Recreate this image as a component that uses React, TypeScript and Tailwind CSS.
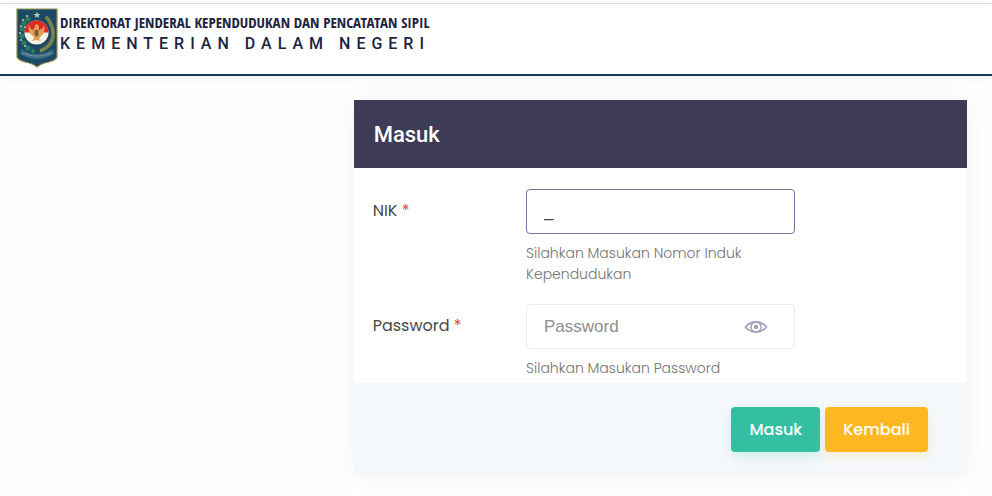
import React, { useState } from 'react';

const Emblem: React.FC = () => (
  <svg viewBox="0 0 42 60" className="w-[42px] h-[60px] shrink-0" role="img" aria-label="Kementerian Dalam Negeri">
    <path d="M1 1H41V49Q40 52 33 54Q25 55.500 21 59Q17 55.500 9 54Q2 52 1 49Z" fill="#1b4a66" stroke="#8d8c4e" strokeWidth="1.200" />
    {/* cotton on the left, rice on the right */}
    <g fill="#2f7d5d">
      <circle cx="12" cy="11" r="2.500" />
      <circle cx="8" cy="15" r="2.500" />
      <circle cx="6" cy="21" r="2.500" />
      <circle cx="6" cy="28" r="2.500" />
      <circle cx="8" cy="35" r="2.500" />
      <circle cx="12" cy="40" r="2.500" />
      <circle cx="17" cy="43" r="2" />
    </g>
    <g fill="#b5d0cc">
      <circle cx="11" cy="8" r="1" />
      <circle cx="7" cy="12" r="1" />
      <circle cx="5" cy="18" r="1" />
      <circle cx="9" cy="19" r="1" />
      <circle cx="4" cy="25" r="1" />
      <circle cx="5" cy="32" r="1" />
      <circle cx="9" cy="38" r="1" />
    </g>
    <path d="M30 9Q38 17 37 29Q35 39 24 43" fill="none" stroke="#5d7350" strokeWidth="4" />
    <path d="M30 9Q38 17 37 29Q35 39 24 43" fill="none" stroke="#978f52" strokeWidth="2.500" strokeDasharray="1.500 1" />
    <path d="M21 3.500L22 6H24.500L22.500 7.500L23.300 10L21 8.500L18.700 10L19.500 7.500L17.500 6H20Z" fill="#b9c8b3" />
    <circle cx="20.500" cy="24.500" r="12" fill="#f5f2e7" />
    <path d="M8.500 24.500A12 12 0 0 1 32.500 24.500Z" fill="#df2a20" />
    {/* garuda */}
    <path d="M13 17Q14 21 17 22L19 19L19 17L21 16L23 18L23 22Q27 21 28 17Q30 24 25 28L23 31L25 33L21 32L16 33L18 30L17 28Q11 24 13 17Z" fill="#e0a05a" />
    <path d="M18.500 22H22.500V27L20.500 29L18.500 27Z" fill="#8b5833" />
    <path d="M5 41Q21 51 37 41L38 46Q30 51 21 51Q12 51 4 46Z" fill="#386b85" />
    <path d="M7 45Q21 51 35 45" fill="none" stroke="#8fa59c" strokeWidth="1.200" strokeDasharray="1.500 1" />
  </svg>
);

const EyeIcon: React.FC = () => (
  <svg viewBox="0 0 24 16" className="w-6 h-4" fill="none" stroke="#a3a2c0" aria-hidden="true">
    <path d="M1.500 8Q5.500 3 12 3T22.500 8Q18.500 13 12 13T1.500 8Z" strokeWidth="1.800" />
    <circle cx="12" cy="8" r="5" strokeWidth="1.500" />
    <circle cx="12" cy="8" r="2.300" fill="#a3a2c0" stroke="none" />
  </svg>
);

const Required: React.FC = () => <span className="text-[#e0443c]">*</span>;

const App: React.FC = () => {
  const [nik, setNik] = useState('_');
  const [password, setPassword] = useState('');
  const [showPassword, setShowPassword] = useState(false);

  return (
    <div className="min-h-screen bg-[#fefefe] font-['Poppins','Inter',sans-serif] text-[#484848]">
      <header className="mt-[3px] flex items-start border-t border-t-[#dcdcdc] border-b-2 border-b-[#173b51] bg-white px-4 pt-1 pb-1.5 shadow-[0_2px_12px_rgba(60,60,90,0.05)]">
        <Emblem />
        <div className="ml-0.5 mt-1 whitespace-nowrap text-[#1d2340]">
          <div className="font-['Open_Sans_Condensed','Roboto',sans-serif] text-[15px] leading-[21px]">DIREKTORAT JENDERAL KEPENDUDUKAN DAN PENCATATAN SIPIL</div>
          <div className="font-['Roboto',sans-serif] text-base font-medium leading-[21px] tracking-[6px]">KEMENTERIAN DALAM NEGERI</div>
        </div>
      </header>

      <main className="grid grid-cols-12 pt-6">
        <section className="col-span-8 col-start-5 pl-[23px] pr-[25px]">
          <form className="bg-white shadow-[0_0_24px_rgba(82,63,105,0.06)]" onSubmit={(e) => e.preventDefault()}>
            <div className="bg-[#3d3b56] px-5 pt-[21px] pb-[19px]">
              <h1 className="font-['Roboto',sans-serif] text-[22px] font-medium leading-7 text-white">Masuk</h1>
            </div>

            <div className="space-y-[19px] pt-[21px] pb-1">
              <div className="flex">
                <label htmlFor="nik" className="w-1/4 px-[19px] pt-2.5 text-base leading-6">
                  NIK <Required />
                </label>
                <div className="w-1/2 px-[19px]">
                  <input
                    id="nik"
                    type="text"
                    value={nik}
                    onChange={(e) => setNik(e.target.value)}
                    className="block h-[45px] w-full rounded border border-[#76759a] bg-white px-[17px] font-['Liberation_Sans',sans-serif] text-[17px] outline-none"
                  />
                  <p className="mt-[9px] text-sm font-light leading-[21px] text-[#747474]">Silahkan Masukan Nomor Induk Kependudukan</p>
                </div>
              </div>

              <div className="flex">
                <label htmlFor="password" className="w-1/4 px-[19px] pt-2.5 text-base leading-6">
                  Password <Required />
                </label>
                <div className="w-1/2 px-[19px]">
                  <div className="flex h-[45px] items-center rounded border border-[#ebebf0] bg-white pl-[17px] pr-[26px]">
                    <input
                      id="password"
                      type={showPassword ? 'text' : 'password'}
                      placeholder="Password"
                      value={password}
                      onChange={(e) => setPassword(e.target.value)}
                      className="min-w-0 flex-1 bg-transparent font-['Liberation_Sans',sans-serif] text-[17px] outline-none placeholder:text-[#8e8e8e]"
                    />
                    <button type="button" aria-label="Tampilkan password" onClick={() => setShowPassword(!showPassword)}>
                      <EyeIcon />
                    </button>
                  </div>
                  <p className="mt-[9px] text-sm font-light leading-[21px] text-[#747474]">Silahkan Masukan Password</p>
                </div>
              </div>
            </div>

            <div className="flex justify-end gap-[5px] bg-[#f5f8fb] py-6 pr-[39px]">
              <button type="submit" className="h-[45px] rounded bg-[#34bfa3] px-[18px] text-base font-medium text-white shadow-[0_5px_12px_rgba(52,191,163,0.18)]">
                Masuk
              </button>
              <button type="button" className="h-[45px] rounded bg-[#ffb822] px-[18px] text-base font-medium text-white shadow-[0_5px_12px_rgba(255,184,34,0.18)]">
                Kembali
              </button>
            </div>
          </form>
        </section>
      </main>
    </div>
  );
};

export default App;
